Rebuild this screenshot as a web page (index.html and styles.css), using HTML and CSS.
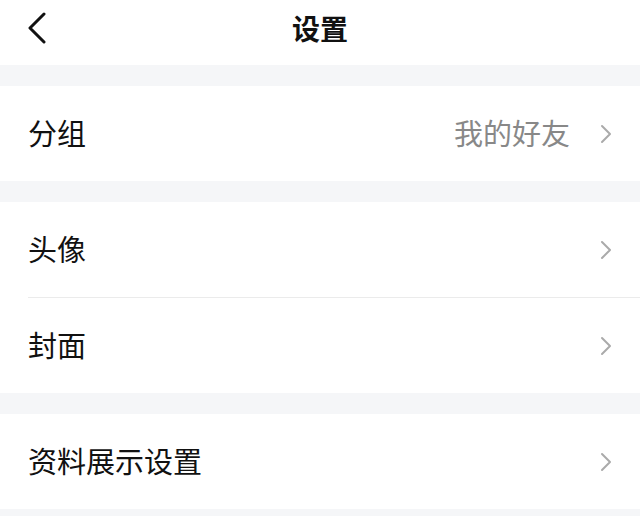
FILE: index.html
```html
<!DOCTYPE html>
<html lang="zh-CN">
<head>
  <meta charset="UTF-8">
  <title>设置</title>
  <link rel="stylesheet" href="styles.css">
</head>
<body>
  <!-- 顶部导航 -->
  <header class="nav-bar">
    <span class="nav-back">
      <svg width="20" height="32" viewBox="0 0 20 32">
        <path d="M17 2 L3 16 L17 30" fill="none" stroke="#111" stroke-width="3" stroke-linecap="round" stroke-linejoin="round"/>
      </svg>
    </span>
    <h1 class="nav-title">设置</h1>
  </header>

  <div class="gap"></div>

  <section class="group">
    <div class="row">
      <span class="row-label">分组</span>
      <span class="row-value">我的好友</span>
      <span class="row-arrow"><svg width="12" height="20" viewBox="0 0 12 20"><path d="M2 2 L10 10 L2 18" fill="none" stroke="#aaa" stroke-width="2" stroke-linecap="round" stroke-linejoin="round"/></svg></span>
    </div>
  </section>

  <div class="gap"></div>

  <section class="group">
    <div class="row">
      <span class="row-label">头像</span>
      <span class="row-arrow"><svg width="12" height="20" viewBox="0 0 12 20"><path d="M2 2 L10 10 L2 18" fill="none" stroke="#aaa" stroke-width="2" stroke-linecap="round" stroke-linejoin="round"/></svg></span>
    </div>
    <div class="row">
      <span class="row-label">封面</span>
      <span class="row-arrow"><svg width="12" height="20" viewBox="0 0 12 20"><path d="M2 2 L10 10 L2 18" fill="none" stroke="#aaa" stroke-width="2" stroke-linecap="round" stroke-linejoin="round"/></svg></span>
    </div>
  </section>

  <div class="gap"></div>

  <section class="group">
    <div class="row">
      <span class="row-label">资料展示设置</span>
      <span class="row-arrow"><svg width="12" height="20" viewBox="0 0 12 20"><path d="M2 2 L10 10 L2 18" fill="none" stroke="#aaa" stroke-width="2" stroke-linecap="round" stroke-linejoin="round"/></svg></span>
    </div>
  </section>

  <div class="gap"></div>
</body>
</html>
```

FILE: styles.css
```css
body {
  margin: 0;
  background-color: #f5f6f8;
  font-family: "Noto Sans CJK SC", "Noto Sans", sans-serif;
  color: #111;
}

/* 顶部导航 */
.nav-bar {
  height: 65px;
  background-color: #fff;
  display: flex;
  align-items: center;
  justify-content: center;
  position: relative;
}

.nav-back {
  position: absolute;
  left: 27px;
  top: 12px;
  display: flex;
}

.nav-title {
  margin: 0;
  font-size: 28px;
  font-weight: bold;
  line-height: 1;
  margin-top: -10px;
}

.gap {
  height: 21px;
}

/* 列表分组 */
.group {
  background-color: #fff;
  padding-left: 28px;
}

.row {
  height: 95px;
  display: flex;
  align-items: center;
  padding-right: 28px;
  font-size: 29px;
}

.row + .row {
  border-top: 1px solid #ebebeb;
}

.row-label {
  flex: 1;
  margin-top: -3px;
}

.row-value {
  color: #888;
  margin-right: 30px;
  font-size: 29px;
  margin-top: -3px;
}

.row-arrow {
  display: flex;
}
```
